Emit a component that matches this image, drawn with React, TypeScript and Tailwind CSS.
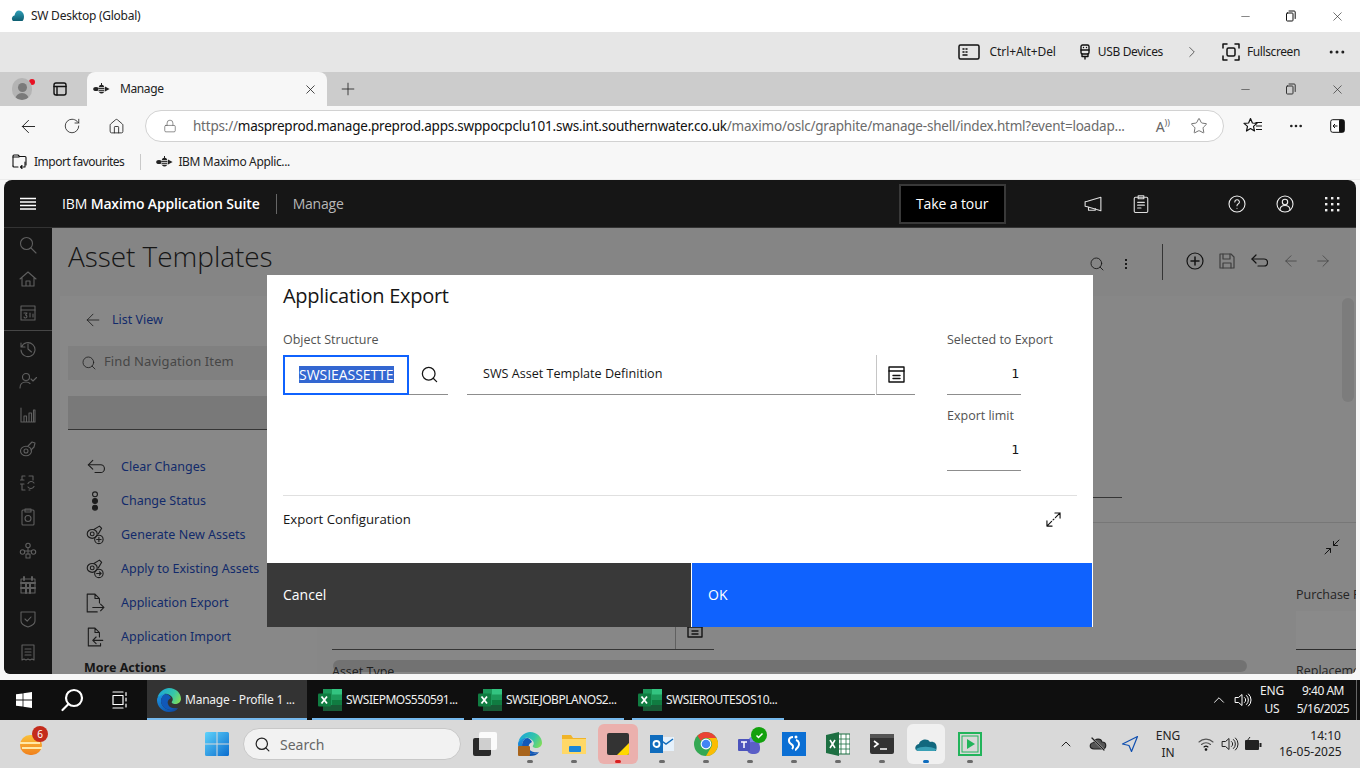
import type { ReactNode } from "react"
import { ArrowLeft, ArrowRight, ChevronRight, ChevronUp, Home, Lock, Minus, MoreHorizontal, Plus, RotateCw, Search, Star, X } from "lucide-react"

const ui = "font-['Noto_Sans',sans-serif]"
const plex = "font-['Open_Sans',sans-serif]"

const Ic = ({ s = 16, c = "currentColor", w = 1.2, box = 16, children }: { s?: number; c?: string; w?: number; box?: number; children: ReactNode }) => (
  <svg width={s} height={s} viewBox={`0 0 ${box} ${box}`} fill="none" stroke={c} strokeWidth={w} strokeLinecap="round" strokeLinejoin="round" className="shrink-0">
    {children}
  </svg>
)

const Restore = ({ c = "#111" }: { c?: string }) => (
  <Ic s={12} box={12} c={c} w={1}>
    <rect x="1.5" y="3" width="6.5" height="8" rx="0.8" />
    <path d="M4 1h5.2a1 1 0 0 1 1 1v6.5" />
  </Ic>
)

const Bee = () => (
  <svg width="17" height="12" viewBox="0 0 17 12" className="shrink-0" fill="#222">
    <ellipse cx="8.5" cy="6.2" rx="3" ry="4.4" />
    <ellipse cx="3" cy="6" rx="2.8" ry="2" />
    <path d="M12 3.6 16.6 6 12 8.4z" />
    <path d="M5.4 4.6h6.2M5.2 6.6h6.6M6 8.4h5" stroke="#f7f7f7" strokeWidth="0.8" />
    <path d="M8.5 0v2" stroke="#222" />
  </svg>
)

const TitleBar = () => (
  <div className={`${ui} h-8 bg-white flex items-center pl-[11px] text-[12px] text-[#222]`}>
    <svg width="14" height="12" viewBox="0 0 14 12" className="shrink-0">
      <defs>
        <linearGradient id="sw" x1="0" y1="0" x2="0" y2="1">
          <stop offset="0" stopColor="#2f9fb8" />
          <stop offset="1" stopColor="#0d5d70" />
        </linearGradient>
      </defs>
      <path d="M2 11c-2-2-1-5 1.500-5.500C4 2.500 6 .5 8 .6c3 .2 5 3 5 5.900 0 2-.6 3.700-1.500 4.500z" fill="url(#sw)" />
    </svg>
    <span className="ml-[6px] tracking-[-0.25px]">SW Desktop (Global)</span>
    <div className="ml-auto flex items-center gap-[33px] pr-[15px]">
      <Minus size={13} strokeWidth={1} />
      <Restore />
      <X size={15} strokeWidth={1} />
    </div>
  </div>
)

const RemoteBar = () => (
  <div className={`${ui} h-10 bg-[#e6e6e6] flex items-center justify-end text-[12px] text-[#1c1c1c] tracking-[-0.1px]`}>
    <Ic s={22} box={22} w={1.5} c="#111">
      <rect x="1" y="4" width="20" height="14" rx="1.5" />
      <path d="M5 8h1M8 8h1M5 11h1M8 11h1M5 14h4" />
    </Ic>
    <span className="ml-[10px]">Ctrl+Alt+Del</span>
    <span className="ml-[21px]">
      <Ic s={16} box={16} w={1.4} c="#111">
        <rect x="4" y="1" width="8" height="9" rx="1.500" />
        <path d="M4 6h8M6.500 3.500h0M9.500 3.500h0M5 10v2.500h6V10M8 12.500V15" />
      </Ic>
    </span>
    <span className="ml-[5px] tracking-[-0.35px]">USB Devices</span>
    <ChevronRight size={18} strokeWidth={1} className="ml-[20px] text-[#333]" />
    <span className="ml-[20px]">
      <Ic s={20} box={20} w={1.5} c="#111">
        <path d="M2 6V2h4M14 2h4v4M18 14v4h-4M6 18H2v-4" />
        <rect x="6" y="6" width="8" height="8" rx="1.500" />
      </Ic>
    </span>
    <span className="ml-[6px] tracking-[-0.4px]">Fullscreen</span>
    <MoreHorizontal size={20} strokeWidth={1.6} className="ml-[27px] mr-[13px]" />
  </div>
)

const TabStrip = () => (
  <div className={`${ui} h-[34px] bg-[#cccccc] flex items-end text-[12px] text-[#222]`}>
    <div className="w-[87px] h-full flex items-center pl-3 shrink-0">
      <div className="relative w-[20px] h-[22px] rounded-full bg-[#b4b4b4] overflow-hidden flex flex-col items-center justify-end">
        <span className="w-[9px] h-[9px] rounded-full bg-[#7a7a7a] mb-[1px]" />
        <span className="w-[14px] h-[7px] rounded-t-full bg-[#7a7a7a]" />
      </div>
      <span className="w-[6px] h-[6px] rounded-full bg-[#e81123] -ml-[3px] -mt-[15px]" />
      <span className="ml-[17px]">
        <Ic s={16} box={16} w={1.4} c="#111">
          <rect x="2" y="2" width="12" height="12" rx="2" />
          <path d="M2 5.500h12M5 5.500V14" />
        </Ic>
      </span>
    </div>
    <div className="w-[240px] h-full bg-[#f7f7f7] rounded-t-lg flex items-center pl-[6px] pr-[7px]">
      <Bee />
      <span className="ml-[10px] tracking-[-0.4px]">Manage</span>
      <X size={15} strokeWidth={1.3} className="ml-auto mr-[2px]" />
    </div>
    <div className="h-full flex items-center ml-[11px]">
      <Plus size={20} strokeWidth={1} />
    </div>
    <div className="ml-auto h-full flex items-center gap-[33px] pr-[15px]">
      <Minus size={13} strokeWidth={1} />
      <Restore c="#333" />
      <X size={15} strokeWidth={1} />
    </div>
  </div>
)

const AddressRow = () => (
  <div className={`${ui} h-[38px] bg-[#f7f7f7] flex items-center pl-[18px] pt-[2px] text-[#222] shrink-0`}>
    <ArrowLeft size={21} strokeWidth={1.1} />
    <RotateCw size={18} strokeWidth={1.1} className="ml-[24px]" />
    <Home size={17} strokeWidth={1.2} className="ml-[27px]" />
    <div className="ml-[20px] w-[1079px] h-8 bg-white rounded-full border border-[#d2d2d2] flex items-center pl-[17px] pr-[15px]">
      <Lock size={14} strokeWidth={1.1} className="text-[#555]" />
      <span className="ml-[16px] text-[13.5px] tracking-[-0.22px] text-[#6b6b6b] whitespace-nowrap">
        https://<span className="text-[#111]">maspreprod.manage.preprod.apps.swppocpclu101.sws.int.southernwater.co.uk</span>/maximo/oslc/graphite/manage-shell/index.html?event=loadap...
      </span>
      <span className="ml-auto text-[14px] text-[#666] leading-none">A<span className="text-[9px] align-super">))</span></span>
      <Star size={18} strokeWidth={1} className="ml-[20px] text-[#444]" />
    </div>
    <span className="ml-[19px]">
      <svg width="20" height="18" viewBox="0 0 20 18" fill="none" stroke="#111" strokeWidth="1.200" strokeLinejoin="round" className="shrink-0">
        <path d="M7.500 1.500 9.400 6l4.600.400-3.500 3 1 4.600-4-2.400-4 2.400 1-4.600L1 6.400 5.600 6z" />
        <path d="M12.500 5.500H19M13 9h6M13 12.500h6" />
      </svg>
    </span>
    <MoreHorizontal size={16} strokeWidth={2} className="ml-[25px]" />
    <svg width="15" height="14" viewBox="0 0 15 14" className="ml-[26px] shrink-0">
      <rect x="0.700" y="0.700" width="13.600" height="12.600" rx="2" fill="#fff" stroke="#111" />
      <rect x="9" y="0.700" width="5.300" height="12.600" rx="1" fill="#111" />
      <path d="M7.500 7H3.500M5 5 3 7l2 2" stroke="#111" fill="none" />
    </svg>
  </div>
)

const BookmarkRow = () => (
  <div className={`${ui} h-[36px] bg-[#f7f7f7] border-b border-[#ececec] flex items-center pl-[11px] text-[12px] text-[#222] tracking-[-0.5px] shrink-0`}>
    <Ic s={17} box={17} w={1.1} c="#111">
      <path d="M2 13V3a1 1 0 0 1 1-1h4l1.500 1.500H14a1 1 0 0 1 1 1V12" />
      <path d="M2 4h6M2 13a1 1 0 0 0 1 1h4M14 9v5H9.500M11 12.500 9.500 14l1.500 1.500" />
    </Ic>
    <span className="ml-[6px]">Import favourites</span>
    <span className="ml-[16px] w-px h-4 bg-[#c9c9c9]" />
    <span className="ml-[15px]"><Bee /></span>
    <span className="ml-[5px] tracking-[-0.35px]">IBM Maximo Applic...</span>
  </div>
)

// carbon style side rail icons, drawn on a 20 box
const rail: ReactNode[] = [
  <><circle cx="8.500" cy="8.500" r="6" /><path d="m13 13 5 5" /></>,
  <><path d="M2 10 10 3l8 7M4 9v8h12V9M8 17v-5h4v5" /></>,
  <><rect x="3" y="3" width="14" height="14" /><path d="M3 7h14M6 10h3l-1.500 2a1.500 1.500 0 1 1-1.500 2M12 10v4M15 11v3" /></>,
  <><path d="M3 5v4h4M3.500 9a7 7 0 1 1-.5 3" /><path d="M10 6v5l3.500 3" /></>,
  <><circle cx="8" cy="6" r="3.500" /><path d="M2 17c0-4 2.500-6 6-6 1.500 0 3 .5 4 1.500M13 8l2 2 3.500-3.500" /></>,
  <><path d="M3 3v14h14M6 17v-6h2.500v6M11 17V8h2.500v9M15.500 17V5H17v12" /></>,
  <><ellipse cx="8" cy="12" rx="5.500" ry="4.800" /><circle cx="8" cy="12" r="2" /><path d="m10 7 4-4 3 1-1 4-3 3" /></>,
  <><path d="M4 7V3h3M11 3h4v4M4 11v6h3M11 17h1M16 10a3.500 3.500 0 0 0-6 .5M10 14a3.500 3.500 0 0 0 6-.5M2.500 7H6M2.500 11H6" /></>,
  <><rect x="4" y="3" width="12" height="15" rx="1" /><rect x="7" y="2" width="6" height="3" /><circle cx="10" cy="11.500" r="3" /></>,
  <><circle cx="10" cy="4.500" r="2.200" /><circle cx="4.500" cy="11" r="2.200" /><circle cx="15.500" cy="11" r="2.200" /><rect x="8" y="13" width="4" height="4" /><path d="M10 7v6M6.500 10h7" /></>,
  <><rect x="3" y="4" width="14" height="14" /><path d="M6 2v3M14 2v3M3 8h14M3 13h14M8 8v10M12 8v10" strokeWidth="2" /></>,
  <><path d="M3 3h14v9c0 3-4 5-7 6-3-1-7-3-7-6z" /><path d="m7 10 2.200 2.200L13 8" /></>,
  <><path d="M4 2h12v15l-2-1-2 1-2-1-2 1-2-1-2 1z" /><path d="M7 6h6M7 9h6M7 12h6" /></>,
]

const SideRail = () => (
  <div className="w-12 h-full bg-[#161616] flex flex-col items-center shrink-0 text-[#a8a8a8]">
    {rail.map((g, i) => (
      <div key={i} className={`w-12 h-[34px] flex items-center justify-center shrink-0 ${i === 3 ? "border-t border-[#777]" : ""}`}>
        <Ic s={20} box={20} w={1.1}>{g}</Ic>
      </div>
    ))}
  </div>
)

const navItems: [string, ReactNode][] = [
  ["Clear Changes", <><path d="M7 3 3 7l4 4" /><path d="M3 7h11a3.500 3.500 0 0 1 0 7H9" /></>],
  ["Change Status", <><circle cx="9" cy="3" r="2.200" /><circle cx="9" cy="9" r="2.200" fill="#222" /><circle cx="9" cy="15" r="2.200" fill="#222" /></>],
  ["Generate New Assets", <><ellipse cx="6.500" cy="8" rx="4.500" ry="4" /><circle cx="6.500" cy="8" r="1.700" /><path d="m8 4 5-3 2 2-3 5" /><circle cx="12.500" cy="13" r="3.800" /><path d="M12.500 11v4M10.500 13h4" /></>],
  ["Apply to Existing Assets", <><ellipse cx="6.500" cy="8" rx="4.500" ry="4" /><circle cx="6.500" cy="8" r="1.700" /><path d="m8 4 5-3 2 2-3 5" /><circle cx="12.500" cy="13" r="3.800" /><path d="M10.500 13h4M13 11.500l1.500 1.500-1.500 1.500" /></>],
  ["Application Export", <><path d="M13 9V5L9 1H2v16h9M9 1v4h4M7 13h10M14 10l3 3-3 3" /></>],
  ["Application Import", <><path d="M13 9V5L9 1H3v16h11v-2M9 1v4h4M16 12H7M10 9l-3 3 3 3" /></>],
]

const NavPanel = () => (
  <div className="ml-2 w-[257px] h-full bg-[#fafafa] pl-2 shrink-0 overflow-hidden">
    <div className="h-[50px] flex items-center pb-[2px] pl-[15px] text-[12.5px] text-[#0f3fc0]">
      <ArrowLeft size={20} strokeWidth={1} className="text-[#222]" />
      <span className="ml-[9px]">List View</span>
    </div>
    <div className="h-[34px] bg-[#ebebeb] flex items-center pl-[13px] text-[13px] text-[#777]">
      <Search size={16} strokeWidth={1.2} className="text-[#222]" />
      <span className="ml-[7px] pb-[2px] tracking-[0.1px]">Find Navigation Item</span>
    </div>
    <div className="mt-4 h-[34px] bg-[#dcdcdc] border-b border-[#555]" />
    <div className="mt-5 flex flex-col">
      {navItems.map(([label, g]) => (
        <div key={label} className="h-[34px] flex items-center pl-[17px] text-[12.5px] text-[#0f3fc0] whitespace-nowrap">
          <span className="text-[#222]"><Ic s={20} box={18} w={1}>{g}</Ic></span>
          <span className="ml-[16px]">{label}</span>
        </div>
      ))}
    </div>
    <div className="pl-4 mt-[5px] text-[12.500px] font-bold text-[#161616]">More Actions</div>
  </div>
)

const FormBehind = () => (
  <div className="flex-1 h-full bg-[#f8f8f8] relative overflow-hidden">
    <div className="ml-[720px] mt-[201px] w-[85px] h-px bg-[#555]" />
    <div className="mt-6 h-px bg-[#d8d8d8]" />
    <div className="mt-4 flex justify-end pr-[16px]">
      <Ic s={16} box={16} w={1} c="#111">
        <path d="M15 1 9.500 6.500M9.500 2.500v4h4M1 15l5.500-5.500M2.500 9.500h4v4" />
      </Ic>
    </div>
    <div className="flex mt-[32px]">
      <div className="ml-[15px] w-[382px] shrink-0 mt-[8px] h-[55px] border-b border-[#555] flex justify-end">
        <div className="w-[39px] border-l border-[#aaa] flex items-end justify-center pb-[11px]">
          <Ic s={16} box={16} w={1.4} c="#111"><rect x="1" y="1" width="14" height="14" /><path d="M1 5h14M5 9h6M5 12h6" /></Ic>
        </div>
      </div>
      <div className="ml-[582px] w-[200px] shrink-0">
        <div className={`${plex} text-[12.5px] text-[#333] h-4 leading-4 whitespace-nowrap`}>Purchase Price</div>
        <div className="mt-2 h-[39px] bg-white border-b border-[#444]" />
      </div>
    </div>
    <div className={`${plex} flex text-[12.5px] leading-4 text-[#333] whitespace-nowrap`}>
      <span className="ml-[15px] w-[964px] shrink-0 mt-[14px]">Asset Type</span>
      <span className="mt-[13px]">Replacement</span>
    </div>
  </div>
)

const Dialog = () => (
  <div className={`${plex} absolute left-[263px] top-[95px] w-[826px] h-[352px] bg-white flex flex-col`}>
    <div className="h-[288px] px-4 pt-[9px] text-[#161616]">
      <div className="text-[20px] leading-6 tracking-[-0.28px]">Application Export</div>
      <div className="flex mt-[24px]">
        <div className="w-[165px] shrink-0">
          <div className="text-[12.5px] leading-4 text-[#525252] mb-[7px]">Object Structure</div>
          <div className="flex h-10">
            <div className="w-[126px] h-10 border-2 border-[#0f62fe] pl-[14px] pb-[2px] flex items-center">
              <span className="bg-[#3367d1] text-white text-[14px] leading-[17px] whitespace-nowrap tracking-[-0.05px]">SWSIEASSETTE</span>
            </div>
            <div className="flex-1 border-b border-[#8d8d8d] flex items-center pl-[11px]">
              <Search size={19} strokeWidth={1.6} className="text-[#161616]" />
            </div>
          </div>
        </div>
        <div className="ml-[19px] w-[448px] shrink-0 mt-[23px] flex h-10">
          <div className="w-[408px] border-b border-[#8d8d8d] flex items-center pl-[16px] text-[12.6px]">SWS Asset Template Definition</div>
          <div className="ml-px flex-1 border-l border-b border-[#c6c6c6] border-b-[#8d8d8d] flex items-center justify-center">
            <Ic s={17} box={17} w={1.4} c="#111"><rect x="1" y="1" width="15" height="15" /><path d="M1 5h15M5 9.500h7M5 12.500h7" /></Ic>
          </div>
        </div>
        <div className="ml-[32px] w-[108px] shrink-0 text-[12.5px] text-[#525252]">
          <div className="leading-4 whitespace-nowrap">Selected to Export</div>
          <div className="mt-[7px] w-[74px] h-10 border-b border-[#8d8d8d] flex items-center justify-end pr-[2px] pb-[2px] font-['DejaVu_Sans_Mono',monospace] text-[#161616] text-[13px]">1</div>
          <div className="mt-[13px] leading-4">Export limit</div>
          <div className="mt-[7px] w-[74px] h-10 border-b border-[#8d8d8d] flex items-center justify-end pr-[2px] pb-[2px] font-['DejaVu_Sans_Mono',monospace] text-[#161616] text-[13px]">1</div>
        </div>
      </div>
      <div className="mt-[24px] h-px bg-[#e0e0e0]" />
      <div className="flex items-center justify-between h-[47px] pr-4 text-[13.2px]">
        <span>Export Configuration</span>
        <Ic s={15} box={16} w={1.200} c="#111"><path d="M1 15 6 10M10 6l5-5M9.500 1H15v5.500M1 9.500V15h5.500M7.500 8.500l1-1" /></Ic>
      </div>
    </div>
    <div className="flex h-[64px] text-white text-[14px]">
      <div className="w-[424px] bg-[#393939] pl-4 pb-[2px] flex items-center">Cancel</div>
      <div className="ml-px w-[400px] bg-[#0f62fe] pl-4 pb-[2px] flex items-center">OK</div>
    </div>
  </div>
)

const AppHeader = () => (
  <div className={`${plex} relative z-20 h-12 bg-[#161616] border-b border-[#333] flex items-center text-white text-[14px] shrink-0`}>
    <div className="w-12 flex justify-center">
      <Ic s={16} box={16} w={1.3} c="#fff"><path d="M0 2.500h16M0 6h16M0 9.500h16M0 13h16" strokeLinecap="butt" /></Ic>
    </div>
    <span className="ml-[10px] tracking-[-0.14px]">IBM <span className="font-semibold">Maximo Application Suite</span></span>
    <span className="ml-[16px] w-px h-[20px] bg-[#666]" />
    <span className="ml-[16px] text-[#b8b8b8] tracking-[-0.2px]">Manage</span>
    <div className="ml-[555px] w-[107px] h-10 bg-black border-2 border-[#393939] flex items-center justify-center tracking-[-0.1px]">Take a tour</div>
    <div className="ml-[78px] flex items-center gap-[30px]">
      <Ic s={18} box={16} w={1} c="#ddd"><path d="M1 6v4l2 .500 12 3.500V2L3 5.500z" /><path d="M4 11v2.500h6V12" /></Ic>
      <Ic s={18} box={16} w={1} c="#ddd"><rect x="2" y="2" width="12" height="13.500" rx="1" /><rect x="5.500" y="0.700" width="5" height="2.600" /><path d="M5 6.500h6M5 9h6M5 11.500h3" /></Ic>
    </div>
    <div className="ml-[78px] flex items-center gap-[30px] text-white">
      <Ic s={18} box={18} w={1.100} c="#eee"><circle cx="9" cy="9" r="8" /><path d="M6.800 7a2.300 2.300 0 1 1 3.300 2.100c-.7.400-1.100.9-1.100 1.700M9 13.200v.1" /></Ic>
      <Ic s={18} box={18} w={1.100} c="#eee"><circle cx="9" cy="9" r="8" /><circle cx="9" cy="7" r="2.700" /><path d="M4 15c0-3 2-4.500 5-4.500s5 1.500 5 4.500" /></Ic>
      <svg width="16" height="16" viewBox="0 0 16 16" fill="#eee" className="shrink-0">
        {[1, 7, 13].map((y) => [1, 7, 13].map((x) => <rect key={`${x}-${y}`} x={x} y={y} width="2.400" height="2.400" />))}
      </svg>
    </div>
  </div>
)

const ToolRow = () => (
  <div className="h-[68px] flex shrink-0 text-[#161616]">
    <div className={`${plex} pl-4 pt-[8px] text-[28px] font-light leading-10 tracking-[-0.05px] text-[#161616]`}>Asset Templates</div>
    <div className="ml-auto flex items-start pr-[24px] pt-4">
      <div className="mt-3 mr-[20px]"><Search size={16} strokeWidth={1.3} /></div>
      <div className="mt-3 mr-[35px] flex flex-col gap-[2px] pt-[3px]">
        <span className="w-[2px] h-[2px] bg-[#222]" />
        <span className="w-[2px] h-[2px] bg-[#222]" />
        <span className="w-[2px] h-[2px] bg-[#222]" />
      </div>
      <div className="w-px h-[36px] bg-[#555] mr-[23px]" />
      <div className="flex items-center gap-[14px] mt-[8px]">
        <Ic s={18} box={18} w={1.2} c="#111"><circle cx="9" cy="9" r="8" /><path d="M9 5v8M5 9h8" strokeWidth="1.500" /></Ic>
        <Ic s={18} box={18} w={1.2} c="#666"><path d="M2 2h11l3 3v11H2z" /><path d="M5 2v5h7V2M5 16v-5h8v5" /></Ic>
        <Ic s={18} box={18} w={1.200} c="#111"><path d="M6 3 2 7l4 4" /><path d="M2 7h12a3 3 0 0 1 0 7H8" /></Ic>
        <ArrowLeft size={18} strokeWidth={1} className="text-[#6a6a6a]" />
        <ArrowRight size={18} strokeWidth={1} className="text-[#6a6a6a]" />
      </div>
    </div>
  </div>
)

const AppFrame = () => (
  <div className="relative mx-1 h-[494px] rounded-t-lg rounded-b-md overflow-hidden flex flex-col bg-white shrink-0">
    <AppHeader />
    <div className="flex-1 flex min-h-0 bg-[#f4f4f4]">
      <SideRail />
      <div className="flex-1 flex flex-col min-w-0">
        <ToolRow />
        <div className="flex-1 flex min-h-0">
          <NavPanel />
          <FormBehind />
        </div>
      </div>
    </div>
    {/* modal scrim sits under the header */}
    <div className="absolute left-0 right-0 top-12 bottom-0 bg-[#161616]/50" />
    <div className="absolute right-[2px] top-[118px] w-[12px] h-[104px] rounded-full bg-[#7c7c7c]" />
    <div className="absolute left-[329px] top-[480px] w-[914px] h-3 rounded-full bg-black/15" />
    <Dialog />
  </div>
)

const ExcelLogo = ({ s = 24 }: { s?: number }) => (
  <svg width={s} height={s} viewBox="0 0 24 24" className="shrink-0">
    <rect x="5" y="1" width="19" height="22" fill="#1d9a5b" />
    <rect x="14" y="1" width="10" height="5.500" fill="#33c481" />
    <rect x="14" y="12" width="10" height="5.500" fill="#107c41" />
    <rect x="5" y="17" width="19" height="6" fill="#185c37" />
    <rect x="0" y="5.500" width="13" height="13" rx="1" fill="#107c41" />
    <path d="m3.500 8.500 5.500 7M9 8.500l-5.500 7" stroke="#fff" strokeWidth="1.800" />
  </svg>
)

const EdgeLogo = ({ s = 24, id = "e" }: { s?: number; id?: string }) => (
  <svg width={s} height={s} viewBox="0 0 24 24" className="shrink-0">
    <defs>
      <linearGradient id={`${id}A`} x1="0" y1="0.300" x2="1" y2="0.700">
        <stop offset="0" stopColor="#1ba7d8" />
        <stop offset="0.600" stopColor="#36c6a8" />
        <stop offset="1" stopColor="#7fdc5a" />
      </linearGradient>
      <linearGradient id={`${id}B`} x1="0" y1="0" x2="0.700" y2="1">
        <stop offset="0" stopColor="#1e9be6" />
        <stop offset="1" stopColor="#0c4da8" />
      </linearGradient>
    </defs>
    <path d="M0 12C0 8 5 5 9 6c-3 1-5 4-5 7 0 5 5 9 10 9 3 0 5-1 7-2-2 3-5 4-9 4C5 24 0 18 0 12z" fill={`url(#${id}B)`} />
    <path d="M9 6c-3 1-5 4-5 7 0 5 5 9 10 9 3 0 5-1 7-2-4 1-9 0-10-4-1-3 1-5 3-6-1-2-3-4-5-4z" fill="#1158b8" />
    <path d="M.600 9C2.500 3.500 7.500 0 12 0c7 0 12 5 12 11 0 3-3 5-6 5-2 0-4-1-3-2.500 1-1.500 1-3 0-4.500C13 6.500 10 5 7 6 4 7 2 8.500.6 9z" fill={`url(#${id}A)`} />
  </svg>
)

const Tab1 = ({ label, active }: { label: string; active?: boolean }) => (
  <div className={`relative h-full flex items-center ${active ? "w-[160px] bg-[#333] pl-[10px]" : "w-[152px] pl-[6px]"} mr-[5px] last:mr-0`}>
    {active ? <EdgeLogo id="edge1" /> : <ExcelLogo />}
    <span className={`ml-[4px] whitespace-nowrap ${active ? "tracking-[-0.24px]" : "tracking-[-0.48px]"}`}>{label}</span>
    <span className="absolute left-0 right-0 bottom-0 h-[2px] bg-[#76b9ed]" />
  </div>
)

const TaskbarOld = () => (
  <div className={`${ui} h-10 bg-[#0f0f0f] flex items-center text-[12px] text-[#f0f0f0] shrink-0`}>
    <div className="w-[48px] flex justify-center">
      <svg width="16" height="16" viewBox="0 0 16 16" fill="#fff"><path d="M0 2.300 6.600 1.400v6.200H0zM7.400 1.300 16 0v7.600H7.400zM0 8.400h6.600v6.200L0 13.700zM7.400 8.400H16V16l-8.600-1.300z" /></svg>
    </div>
    <div className="w-[48px] flex justify-center">
      <svg width="24" height="24" viewBox="0 0 24 24" fill="none" stroke="#fff" strokeWidth="2.200" strokeLinecap="round"><circle cx="14" cy="10" r="8" /><path d="m8.500 16-6 6" /></svg>
    </div>
    <div className="w-[48px] flex justify-center">
      <Ic s={18} box={18} w={1.2} c="#fff"><path d="M2 1h10M2 17h10M2 4.500h10v9H2zM15 1.500v3M15 7v3M15 13v3" /></Ic>
    </div>
    <div className="ml-[3px] h-full flex">
      <Tab1 label="Manage - Profile 1 ..." active />
      <Tab1 label="SWSIEPMOS550591..." />
      <div className="w-[3px]" />
      <Tab1 label="SWSIEJOBPLANOS2..." />
      <div className="w-[3px]" />
      <Tab1 label="SWSIEROUTESOS10..." />
    </div>
    <div className="ml-auto flex items-center h-full">
      <ChevronUp size={18} strokeWidth={1.300} />
      <span className="ml-[6px]">
        <Ic s={18} box={18} w={1} c="#fff"><path d="M1.500 6.500h3L8 3.500v11l-3.500-3h-3zM10.500 6.500a3 3 0 0 1 0 5M12.500 4.500a6 6 0 0 1 0 9M14.500 3a8 8 0 0 1 0 12" /></Ic>
      </span>
      <div className="ml-[5px] w-[30px] text-center leading-[18px] tracking-[-0.2px]">ENG<br />US</div>
      <div className="ml-[8px] w-[56px] text-center leading-[18px] whitespace-nowrap tracking-[-0.5px]">9:40 AM<br />5/16/2025</div>
      <span className="ml-[5px] mr-[3px] w-px h-full bg-[#666]" />
    </div>
  </div>
)

const Slot = ({ children, bar = "#6b6b6b", cls = "" }: { children: ReactNode; bar?: string; cls?: string }) => (
  <div className={`relative w-[44px] h-[40px] flex items-center justify-center shrink-0 ${cls}`}>
    {children}
    <span className="absolute bottom-[1px] w-[6px] h-[3px] rounded-full" style={{ background: bar }} />
  </div>
)

const DockIcons = () => (
  <div className="flex items-center ml-[3px]">
    <Slot bar="transparent">
      <svg width="24" height="24" viewBox="0 0 24 24" className="-ml-[2px]"><rect x="6" y="0" width="18" height="18" rx="2" fill="#fbfbfb" /><rect x="0" y="6" width="18" height="18" rx="2" fill="#2a2a2a" /><rect x="6" y="6" width="12" height="12" fill="#cfcfcf" /></svg>
    </Slot>
    <Slot>
      <div className="relative">
        <EdgeLogo id="edge2" />
        <span className="absolute left-0 bottom-0 w-[12px] h-[10px] rounded-[1px] bg-[#a8641c]" />
      </div>
    </Slot>
    <Slot>
      <svg width="24" height="24" viewBox="0 0 24 24"><path d="M0 3h9l2 3h13v16H0z" fill="#f0b429" /><rect y="7" width="24" height="15" fill="#ffd867" /><rect x="7" y="14" width="12" height="6" rx="1" fill="#1b86d8" /></svg>
    </Slot>
    <Slot bar="#d92020" cls="bg-[#ebb0ad] rounded-md !w-[40px] mx-[2px]">
      <svg width="22" height="22" viewBox="0 0 22 22"><rect width="22" height="22" rx="2" fill="#333" /><path d="M22 10v10a2 2 0 0 1-2 2H10z" fill="#ffd800" /></svg>
    </Slot>
    <Slot>
      <svg width="24" height="24" viewBox="0 0 24 24"><rect x="8" y="5" width="16" height="14" fill="#e6f1fb" /><path d="m9 7 7 5 7-5" stroke="#0f6cbd" fill="none" strokeWidth="1.500" /><rect x="0" y="3" width="13" height="18" fill="#0f6cbd" /><circle cx="6.500" cy="12" r="3" fill="none" stroke="#fff" strokeWidth="1.800" /></svg>
    </Slot>
    <Slot>
      <svg width="24" height="24" viewBox="0 0 24 24">
        <circle cx="12" cy="12" r="12" fill="#34a853" />
        <path d="M12 0a12 12 0 0 1 10.400 6H12a6 6 0 0 0-5.200 3L3.500 3.800A12 12 0 0 1 12 0z" fill="#ea4335" />
        <path d="M22.400 6A12 12 0 0 1 12 24l5.200-9A6 6 0 0 0 12 6z" fill="#fbbc04" />
        <circle cx="12" cy="12" r="5.400" fill="#fff" />
        <circle cx="12" cy="12" r="4.300" fill="#4285f4" />
      </svg>
    </Slot>
    <Slot>
      <div className="relative w-6 h-6">
        <svg width="24" height="24" viewBox="0 0 24 24"><circle cx="16" cy="10" r="6" fill="#7b83eb" /><rect x="9" y="10" width="13" height="12" rx="5" fill="#5b5fc7" /><rect x="0" y="7" width="12" height="12" rx="1" fill="#4b53bc" /><path d="M3 10h6M6 10v6" stroke="#fff" strokeWidth="1.500" /></svg>
        <span className="absolute -right-[5px] -top-[5px] w-4 h-4 rounded-full bg-[#13a10e] flex items-center justify-center">
          <svg width="9" height="9" viewBox="0 0 9 9" fill="none" stroke="#fff" strokeWidth="1.500"><path d="m1.500 4.500 2 2 4-4" /></svg>
        </span>
      </div>
    </Slot>
    <Slot>
      <svg width="24" height="24" viewBox="0 0 24 24"><rect width="24" height="24" fill="#0b6fd4" /><path d="M11 5C6 5 6 10 9 12c2 1 3 3 1 5M14 8c3 1 4 4 2 7-1 1-2 3-3 3" stroke="#fff" fill="none" strokeWidth="2" /><circle cx="14" cy="5" r="1.500" fill="#fff" /></svg>
    </Slot>
    <Slot>
      <svg width="24" height="24" viewBox="0 0 24 24"><rect x="10" y="2" width="14" height="20" fill="#fff" stroke="#1d6f42" /><path d="M15 2v20M20 2v20M10 7h14M10 12h14M10 17h14" stroke="#1d6f42" strokeWidth="0.800" /><path d="M0 3 13 0v24L0 21z" fill="#1d6f42" /><path d="m4 8 5 8M9 8l-5 8" stroke="#fff" strokeWidth="1.600" /></svg>
    </Slot>
    <Slot>
      <svg width="24" height="20" viewBox="0 0 24 20"><rect width="24" height="20" rx="2" fill="#333" /><rect width="24" height="4" fill="#555" /><path d="m4 7 4 3-4 3M10 15h7" stroke="#fff" fill="none" strokeWidth="1.600" /></svg>
    </Slot>
    <Slot bar="#0f6cbd" cls="bg-[#f0f0f0] rounded-md !w-[38px] mx-[3px]">
      <svg width="22" height="16" viewBox="0 0 22 16"><path d="M4 15c-5 0-5-6 0-7 1-5 9-6 11-2 5-1 8 3 6 9z" fill="#12687e" /><path d="M1 13c5-3 14-3 20 0v1l-1 1H3z" fill="#3aa0b5" /></svg>
    </Slot>
    <Slot>
      <svg width="24" height="24" viewBox="0 0 24 24"><rect x="1" y="1" width="22" height="22" fill="none" stroke="#22b45b" strokeWidth="2" /><rect x="4" y="4" width="16" height="16" fill="none" stroke="#22b45b" strokeWidth="1" /><path d="m9 7 8 5-8 5z" fill="#22b45b" /></svg>
    </Slot>
  </div>
)

const TaskbarNew = () => (
  <div className={`${ui} h-12 bg-[#d9d9d9] flex items-center text-[12px] text-[#222] relative shrink-0`}>
    <div className="ml-[20px] relative w-[22px] h-[22px]">
      <span className="absolute inset-0 top-[2px] rounded-full bg-gradient-to-b from-[#f9c03a] to-[#f0801c]" />
      <span className="absolute left-0 top-[9px] w-[20px] h-[2px] bg-[#ffe9a8]" />
      <span className="absolute left-[2px] top-[14px] w-[20px] h-[2px] bg-[#ffe9a8]" />
      <span className="absolute left-[12px] -top-[7px] w-4 h-4 rounded-full bg-[#c42b1c] text-white text-[10px] leading-4 text-center">6</span>
    </div>
    <svg width="24" height="24" viewBox="0 0 24 24" className="ml-[163px] shrink-0">
      <defs>
        <linearGradient id="win" x1="0" y1="0" x2="1" y2="1">
          <stop offset="0" stopColor="#5fd3fb" />
          <stop offset="1" stopColor="#0a6cce" />
        </linearGradient>
      </defs>
      <path d="M0 1.500A1.500 1.500 0 0 1 1.500 0h10v11.500H0zM12.500 0h10A1.500 1.500 0 0 1 24 1.500v10H12.500zM0 12.500h11.500V24h-10A1.500 1.500 0 0 1 0 22.500zM12.500 12.500H24v10a1.500 1.500 0 0 1-1.500 1.500h-10z" fill="url(#win)" />
    </svg>
    <div className="ml-[14px] w-[218px] h-8 rounded-full bg-[#f2f2f2] border border-[#c8c8c8] flex items-center pl-[10px] text-[14px] text-[#666]">
      <Search size={17} strokeWidth={1.700} className="text-[#222]" />
      <span className="ml-[9px]">Search</span>
    </div>
    <DockIcons />
    <div className="ml-auto flex items-center pr-[19px]">
      <ChevronUp size={16} strokeWidth={1.500} />
      <span className="ml-[15px]">
        <Ic s={18} box={18} w={1.200} c="#222"><path d="M5 14c-5 0-5-6 0-6.500C6 3 12 3 13 7c5 0 5 7 0 7z" fill="#555" /><path d="m3 3 12 12" stroke="#d9d9d9" strokeWidth="2" /><path d="m3 3 12 12" /></Ic>
      </span>
      <span className="ml-[14px]">
        <Ic s={18} box={18} w={1.200} c="#0f4fb0"><path d="M16.500 1.500 1.500 9l6.500 1.500L10.500 16.500z" /></Ic>
      </span>
      <div className="ml-[14px] w-[30px] text-center leading-[17px]">ENG<br />IN</div>
      <span className="ml-[14px]">
        <Ic s={18} box={18} w={1.100} c="#555"><path d="M2 7a10 10 0 0 1 14 0M4.500 9.500a6.500 6.500 0 0 1 9 0" /><path d="M7 12a3 3 0 0 1 4 0" stroke="#111" /><circle cx="9" cy="14.500" r="0.800" fill="#111" stroke="#111" /></Ic>
      </span>
      <span className="ml-[6px]">
        <Ic s={18} box={18} w={1} c="#222"><path d="M1.500 6.500h3L8 3.500v11l-3.500-3h-3zM10.500 6.500a3 3 0 0 1 0 5M12.500 4.500a6 6 0 0 1 0 9M14.500 3a8 8 0 0 1 0 12" /></Ic>
      </span>
      <span className="ml-[5px]">
        <svg width="18" height="14" viewBox="0 0 18 14" className="shrink-0"><rect x="1" y="3" width="14" height="10" rx="1" fill="#222" /><rect x="15.500" y="6" width="2" height="4" fill="#222" /><path d="M6 0 3 4h3l-1 3" stroke="#222" fill="none" /></svg>
      </span>
      <div className="ml-[17px] text-right leading-[16px] w-[62px] whitespace-nowrap">14:10<br />16-05-2025</div>
    </div>
  </div>
)

export default function App() {
  return (
    <div className="w-[1360px] h-[768px] flex flex-col overflow-hidden bg-[#f7f7f7]">
      <TitleBar />
      <RemoteBar />
      <TabStrip />
      <AddressRow />
      <BookmarkRow />
      <AppFrame />
      <div className="h-[6px] shrink-0" />
      <TaskbarOld />
      <TaskbarNew />
    </div>
  )
}
